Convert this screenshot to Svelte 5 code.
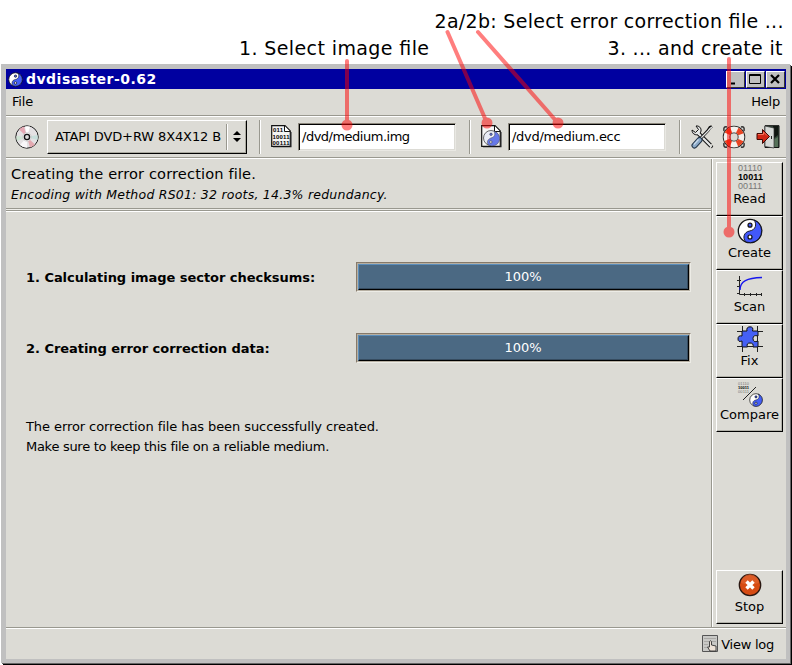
<script>
  const steps = [
    { label: '1. Calculating image sector checksums:', value: 100 },
    { label: '2. Creating error correction data:', value: 100 }
  ];
  const actions = ['Read', 'Create', 'Scan', 'Fix', 'Compare'];
</script>

{#snippet yin(size, color)}
  <svg width={size} height={size} viewBox="0 0 26 26">
    <circle cx="13" cy="13" r="11.7" fill="#fff" stroke="#111" stroke-width="1.3" />
    <path d="M17 2A11.700 11.700 0 1 1 9 24C5 20 7 14 12.500 13C19 12 20 6 17 2Z" fill={color} stroke="#111" stroke-width=".9" />
    <circle cx="13" cy="7.2" r="2" fill={color} stroke="#111" stroke-width="1.2" />
    <circle cx="13" cy="19" r="2" fill="#fff" stroke="#111" stroke-width="1.2" />
  </svg>
{/snippet}

<div class="page">
  <div class="window">
    <header class="title">
      <span class="logo">{@render yin(15, '#4560f5')}</span>
      <h1>dvdisaster-0.62</h1>
      <div class="controls">
        <button aria-label="Minimize"><svg width="17" height="15"><path d="M4 11.5H8" stroke="#000" stroke-width="2" /></svg></button>
        <button aria-label="Maximize"><svg width="17" height="15"><path d="M2.5 2.5H13.5V11.5H2.5ZM2 3.5H14" fill="none" stroke="#000" /></svg></button>
        <button aria-label="Close"><svg width="17" height="15"><path d="M4 3L12 11M12 3L4 11" stroke="#000" stroke-width="2.2" /></svg></button>
      </div>
    </header>
    <nav class="menu"><span>File</span><span>Help</span></nav>
    <div class="toolbar">
      <svg class="disc" width="24" height="24" viewBox="0 0 24 24">
        <circle cx="12" cy="12" r="11.2" fill="#e4e1e3" stroke="#222" />
        <path d="M12 12L4 4.5A11 11 0 0 1 9 1.5Z" fill="#e5a9b4" />
        <path d="M12 12L10 1.5A11 11 0 0 1 15 1.5Z" fill="#fff" />
        <path d="M12 12L20 19.500A11 11 0 0 1 15 22.500Z" fill="#e3a9b0" />
        <path d="M12 12L1.500 11A11 11 0 0 0 2 16Z" fill="#cfe5d4" />
        <path d="M12 12L22.500 10A11 11 0 0 1 22.500 15Z" fill="#c8dfdc" />
        <path d="M12 12L5 20A11 11 0 0 0 12 22.700Z" fill="#f9f7f9" />
        <circle cx="12" cy="12" r="4.300" fill="#eee" stroke="#bbb" stroke-width=".5" />
        <circle cx="12" cy="12" r="2.600" fill="#ddd" stroke="#111" stroke-width="1.300" />
      </svg>
      <button class="drive"><span>ATAPI DVD+RW 8X4X12 B</span>
        <i></i><svg width="8" height="12"><path d="M0 4L4 0L8 4ZM0 7H8L4 11Z" fill="#000" /></svg>
      </button>
      <div class="sep s1"></div>
      <svg class="doc" width="21" height="23" viewBox="0 0 21 23">
        <path d="M2 22H20.500V7" stroke="#777" fill="none" />
        <path d="M.7 .7H14L19.300 6V21.300H.7Z" fill="#f3f3f3" stroke="#111" stroke-width="1.200" />
        <path d="M13.500 1V6.500H19" fill="#fff" stroke="#111" />
        <g class="bits"><text x="2" y="7" textLength="10">011</text><text x="1.500" y="13.500" textLength="17">10011</text><text x="1.500" y="20" textLength="17">00111</text></g>
      </svg>
      <div class="field f1">/dvd/medium.img</div>
      <div class="sep s2"></div>
      <svg class="doc2" width="21" height="23" viewBox="0 0 21 23">
        <path d="M2 22H20.500V7" stroke="#777" fill="none" />
        <path d="M.7 .7H14L19.300 6V21.300H.7Z" fill="#f5f5f5" stroke="#111" stroke-width="1.200" />
        <path d="M13.500 1V6.500H19" fill="#fff" stroke="#111" />
        <circle cx="10" cy="13" r="7.500" fill="#e9ecf6" stroke="#444" stroke-width=".8" />
        <path d="M13 6.200A7.500 7.500 0 1 1 7.500 20C5 17 7 14 10 13C14 12 14.500 9 13 6.200Z" fill="#6678e8" stroke="#444" stroke-width=".5" />
        <circle cx="10" cy="9.300" r="1.200" fill="#6678e8" stroke="#333" stroke-width=".6" />
        <circle cx="9.800" cy="17" r="1.200" fill="#fff" stroke="#333" stroke-width=".6" />
      </svg>
      <div class="field f2">/dvd/medium.ecc</div>
      <div class="sep s3"></div>
      <svg class="tools" width="23" height="24" viewBox="0 0 23 24">
        <path d="M20 21L7.500 8.500" stroke="#111" stroke-width="4.200" stroke-linecap="round" />
        <path d="M1 5L4.500 7.500L7.500 4.500L5 1C8 .5 10.500 3 10 6C9.500 9 6 10.500 4 9.500C2 9 1 7 1 5Z" fill="#e6e8e8" stroke="#111" />
        <path d="M20 21L7.500 8.500" stroke="#e6e8e8" stroke-width="2.200" stroke-linecap="round" />
        <path d="M19 23.500L20.500 20L23.500 19.500" fill="none" stroke="#dcdbd5" stroke-width="1.500" />
        <path d="M21 1.500L19 2.500L17 5.500L10 13" fill="none" stroke="#111" stroke-width="3" />
        <path d="M21 2L19 3.500L17 6L10 13" fill="none" stroke="#e4e6e6" stroke-width="1.300" />
        <path d="M8.500 15L3.500 20.500" stroke="#223447" stroke-width="6" stroke-linecap="round" />
        <path d="M8.500 15L3.500 20.500" stroke="#8ba9c8" stroke-width="4" stroke-linecap="round" />
        <path d="M7.500 14.500L3 19.500" stroke="#cbdced" stroke-width="1.200" />
      </svg>
      <svg class="ring" width="24" height="24" viewBox="0 0 24 24">
        <path d="M5 2Q1 1 2 6M19 2Q23 1 22 6M5 22Q1 23 2 18M19 22Q23 23 22 18" fill="none" stroke="#333" stroke-width="1.500" />
        <circle cx="12" cy="12" r="7.500" fill="none" stroke="#222" stroke-width="7.500" />
        <circle cx="12" cy="12" r="7.500" fill="none" stroke="#f3f0ec" stroke-width="5.800" />
        <circle cx="12" cy="12" r="7.500" fill="none" stroke="#e94523" stroke-width="5.800" stroke-dasharray="5.500 6.281" stroke-dashoffset="-3.140" />
      </svg>
      <svg class="exit" width="24" height="24" viewBox="0 0 24 24">
        <path d="M9 .7H23V22.500H9Z" fill="#33483a" stroke="#111" />
        <path d="M17 1H22V10L17 14Z" fill="#101611" /><path d="M17 15L22 12V22H17Z" fill="#567159" />
        <path d="M9 1L18 3V23L9 21.500Z" fill="#d6d9d6" stroke="#333" stroke-width=".7" />
        <path d="M15.500 11V14" stroke="#222" />
        <path d="M1 8.500H6.500V4.500L13.500 11.500L6.500 18.500V14.500H1Z" fill="#cf2614" stroke="#400904" />
        <path d="M2 9.500H7.500V7L11 10.500" fill="none" stroke="#f5735a" />
      </svg>
    </div>

    <div class="body">
      <main>
        <div class="heading"><h2>Creating the error correction file.</h2><em>Encoding with Method RS01: 32 roots, 14.3% redundancy.</em></div>
        <section>
          {#each steps as step}
            <div class="step"><b>{step.label}</b>
              <div class="track"><div class="bar" style="width: {step.value}%"><span>{step.value}%</span></div></div>
            </div>
          {/each}
          <p><span class="done">The error correction file has been successfully created.</span><br /><span class="advice">Make sure to keep this file on a reliable medium.</span></p>
        </section>
      </main>
      <aside>
        {#each actions as action}
          <button class="action">
            <span class="icon">
              {#if action === 'Read'}
                <svg width="28" height="28"><g class="read"><text x="2" y="8" textLength="24">01110</text><text class="dark" x="2" y="17" textLength="25">10011</text><text x="2" y="26" textLength="24">00111</text></g></svg>
              {:else if action === 'Create'}
                {@render yin(26, '#4258fa')}
              {:else if action === 'Scan'}
                <svg width="26" height="26"><path d="M2.500 4V22.500H25M0 8.500H4M0 14.500H4M0 21.500H2M7.500 21V24M13.500 21V24M19.500 21V24M24.500 21V24" fill="none" stroke="#222" /><path d="M3 18C3 9 10 6 25 5.500" fill="none" stroke="#1717ed" stroke-width="1.400" /></svg>
              {:else if action === 'Fix'}
                <svg width="26" height="26"><path d="M5.500 0V26M20.500 0V26M0 5.500H26M0 20.500H26" stroke="#222" /><path d="M5 5H10Q9 1 13 .8Q17 1 15.500 5H21V10Q16 8.500 16 12.500Q16 17 21 15V21H16Q17 17 13 17Q9 17 10.500 21H5V15Q1 16.500 1 13Q1 9 5 10Z" fill="#4560f5" stroke="#111" /></svg>
              {:else}
                <svg width="26" height="27"><g class="mini"><text x="1" y="5" textLength="11">01110</text><text class="dark" x="1" y="9" textLength="11">10011</text><text x="1" y="13" textLength="11">00111</text></g><path d="M6 20L19 7" stroke="#222" /><g transform="translate(12 13)">{@render yin(14, '#4560f5')}</g></svg>
              {/if}
            </span><span>{action}</span>
          </button>
        {/each}
        <button class="action stop"><span class="icon"><svg width="24" height="26" viewBox="0 0 24 26"><circle cx="12" cy="13" r="10.700" fill="#d64b13" stroke="#2a1711" stroke-width="1.300" /><path d="M3 11A9 9 0 0 1 21 11Q12 14 3 11" fill="#e46b39" opacity=".55" /><path d="M8.500 9.500L15.500 16.500M15.500 9.500L8.500 16.500" stroke="#fff" stroke-width="3.400" /></svg></span><span>Stop</span></button>
      </aside>
    </div>
    <footer>
      <svg width="16" height="18" viewBox="0 0 16 18"><path d="M.5 .5H15.500V16.500H.5Z" fill="#c9c9c6" stroke="#555" /><path d="M2 3.500H14M2 6.500H14M2 9.500H6M2 12.500H5" stroke="#aaa9a6" /><path d="M8 16L5.500 12L7.500 12V6.500Q8.500 5 9.500 6.500V10L14 11V16Z" fill="#eee3d8" stroke="#333" stroke-width=".9" /></svg>
      <span>View log</span>
    </footer>
  </div>

  <svg class="notes" width="792" height="665" viewBox="0 0 792 665">
    <g class="captions"><text x="239" y="55" textLength="190">1. Select image file</text><text x="434.500" y="28" textLength="349">2a/2b: Select error correction file ...</text><text x="607.500" y="55" textLength="175">3. ... and create it</text></g>
    <g opacity=".5" stroke="#f00" stroke-width="4" stroke-linecap="round"><path d="M347 61V125M447.500 32L487 123M478 32L558 123M729 59V232" /><g fill="#f00" stroke="none"><circle cx="347" cy="125" r="5.500" /><circle cx="487" cy="123" r="5.500" /><circle cx="558" cy="123" r="5.500" /><circle cx="729" cy="232" r="5.500" /></g></g>
  </svg>
</div>

<style>
  :global(body) { background: #fff; }
  .page, .page * { box-sizing: border-box; }
  .page { position: relative; width: 792px; height: 665px; padding-top: 64px; overflow: hidden; font: 13px "DejaVu Sans", sans-serif; color: #000; }
  svg { display: block; flex: none; }
  button { font: inherit; color: inherit; padding: 0; border-radius: 0; }
  .window { margin-left: 1px; width: 789px; height: 599px; background: #dcdbd5; border: solid #c0c0c0; border-width: 5px 4px 4px 5px; display: flex; flex-direction: column; box-shadow: 1px 1px #666, 2px 2px #000; }
  .title { height: 20px; flex: none; background: #0000a0; display: flex; align-items: center; color: #fff; padding-left: 2px; }
  .logo { width: 18px; }
  h1 { font-size: 14px; letter-spacing: .48px; font-weight: bold; margin: 0; line-height: 20px; }
  .controls { margin-left: auto; display: flex; padding-right: 1px; gap: 1px; }
  .controls button { width: 19px; height: 17px; background: #c0c0c0; border: 1px solid; border-color: #fff #333 #333 #fff; }
  .menu { height: 28px; flex: none; border-bottom: 1px solid #fff; box-shadow: inset 0 -1px #99988f; display: flex; justify-content: space-between; padding: 0 6px; line-height: 25px; letter-spacing: -.2px; }
  .toolbar { height: 42px; flex: none; border-bottom: 1px solid #fff; box-shadow: inset 0 -1px #99988f; display: flex; align-items: center; padding: 0 0 2px 9px; }
  .drive { margin-left: 8px; width: 200px; height: 34px; margin-top: 1px; border: 1px solid; border-color: #fff #000 #000 #fff; box-shadow: inset -1px -1px #aaa99f; background: #dcdbd5; display: flex; align-items: center; padding: 0 0 1px 7px; white-space: nowrap; letter-spacing: -.12px; }
  .drive span { width: 171px; text-align: left; }
  .drive i { width: 2px; height: 26px; border-left: 1px solid #99988f; border-right: 1px solid #fff; margin-right: 5px; }
  .sep { width: 2px; height: 34px; border-left: 1px solid #99988f; border-right: 1px solid #fff; flex: none; }
  .s1 { margin-left: 12px; }
  .doc { margin-left: 10px; }
  .bits text { font: bold 6px "Liberation Sans", sans-serif; }
  .field { width: 158px; height: 28px; margin-top: 1px; background: #fff; border: 1px solid; border-color: #8b877c #e9e8e3 #e9e8e3 #8b877c; box-shadow: inset 1px 1px #000, inset -1px -1px #dcdbd5; line-height: 26px; padding-left: 3px; letter-spacing: -.5px; }
  .f1 { margin-left: 6px; }
  .s2 { margin-left: 13px; }
  .doc2 { margin-left: 10px; }
  .f2 { margin-left: 6px; letter-spacing: -.3px; }
  .s3 { margin-left: 13px; }
  .tools { margin-left: 10px; }
  .ring { margin-left: 8px; }
  .exit { margin-left: 10px; }
  .body { flex: 1; display: flex; min-height: 0; border-bottom: 1px solid #99988f; }
  main { width: 705px; height: 100%; }
  .heading { height: 53px; padding: 5px 5px 0; border-bottom: 1px solid #fff; box-shadow: inset 0 -1px #99988f, inset 0 -2px #efeeea, inset 0 -3px #99988f; }
  h2 { font-size: 14.600px; letter-spacing: .14px; font-weight: normal; line-height: 20px; margin: 0; white-space: nowrap; }
  em { display: block; line-height: 21px; font-size: 12.500px; letter-spacing: .23px; white-space: nowrap; }
  section { padding: 50px 0 0 20px; }
  .step { height: 30px; margin-bottom: 41px; display: flex; align-items: center; letter-spacing: -.04px; }
  .step b { width: 330px; }
  .track { width: 335px; height: 30px; border: 1px solid; border-color: #85796a #edece6 #edece6 #85796a; box-shadow: inset 0 0 0 1px #b6afa2; padding: 1px; }
  .bar { height: 100%; background: #4b6983; border: 1px solid; border-color: #5a8dbb #000 #000 #5a8dbb; box-shadow: inset -1px -1px #364c60; color: #fff; text-align: center; line-height: 24px; padding-right: 1px; }
  p { margin: 12px 0 0; padding-top: 13px; line-height: 20px; }
  .done { letter-spacing: -.08px; }
  .advice { letter-spacing: -.29px; }
  aside { width: 75px; height: 100%; border-left: 1px solid #99988f; box-shadow: inset 1px 0 #fff; padding: 3px 0 3px 4px; display: flex; flex-direction: column; }
  .action { width: 67px; height: 54px; flex: none; background: #dcdbd5; border: 1px solid; border-color: #fff #000 #000 #fff; box-shadow: inset -1px -1px #b2b1a9; display: flex; flex-direction: column; align-items: center; line-height: 15px; padding-bottom: 2px; }
  .icon { height: 28px; display: flex; align-items: center; padding-left: 1px; }
  .stop { margin-top: auto; }
  .read text { font: 9px "Liberation Sans", sans-serif; fill: #777; }
  .mini text { font: 4px "Liberation Sans", sans-serif; fill: #777; }
  .read .dark, .mini .dark { font-weight: bold; fill: #000; }
  footer { height: 31px; flex: none; border-top: 1px solid #fff; display: flex; justify-content: flex-end; align-items: center; padding-right: 12px; gap: 3px; letter-spacing: -.25px; }
  .notes { position: absolute; inset: 0; pointer-events: none; }
  .captions { font-size: 19px; }
</style>
